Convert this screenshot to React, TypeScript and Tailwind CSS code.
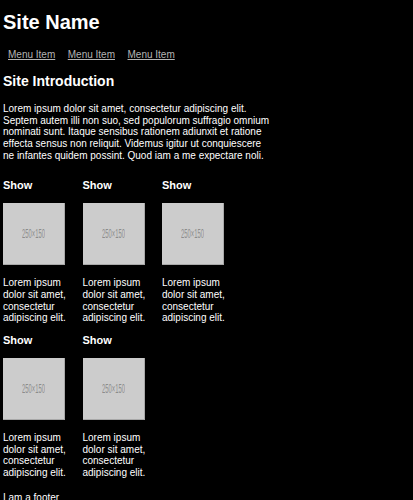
const menuItems = ['Menu Item', 'Menu Item', 'Menu Item'];

const shows = [1, 2, 3, 4, 5];

const Placeholder = () => {
  return (
    <div className="w-[62px] h-[62px] bg-[#cccccc] border-r border-b border-[#a8a8a8] flex items-center justify-center overflow-hidden">
      <span className="text-[13px] leading-none text-[#8c8c8c] scale-x-[0.45] whitespace-nowrap">250×150</span>
    </div>
  );
};

const ShowCard = () => {
  return (
    <div className="w-[63.5px]">
      <h3 className="text-[11px] leading-[13px] font-bold">Show</h3>
      <div className="mt-[11px]">
        <Placeholder />
      </div>
      <p className="mt-[12px] text-[10px] leading-[11.67px]">
        Lorem ipsum dolor sit amet, consectetur adipiscing elit.
      </p>
    </div>
  );
};

export default function App() {
  return (
    <div className="min-h-screen bg-black text-white px-[3px] pt-[11px] font-['Liberation_Sans',Arial,sans-serif]">
      <h1 className="text-[20px] leading-[23px] font-bold">Site Name</h1>

      <nav className="mt-[15px] pl-[5px] flex gap-x-[12.5px]">
        {menuItems.map((item, i) => (
          <a key={i} href="#" className="text-[10px] leading-[11.5px] text-[#b4b4b4] underline">
            {item}
          </a>
        ))}
      </nav>

      <h2 className="mt-[12.5px] text-[14px] leading-[16px] font-bold">Site Introduction</h2>

      <p className="mt-[14px] w-[290px] text-[10px] leading-[11.67px]">
        Lorem ipsum dolor sit amet, consectetur adipiscing elit.
        <br />
        Septem autem illi non suo, sed populorum suffragio omnium
        <br />
        nominati sunt. Itaque sensibus rationem adiunxit et ratione
        <br />
        effecta sensus non reliquit. Videmus igitur ut conquiescere
        <br />
        ne infantes quidem possint. Quod iam a me expectare noli.
      </p>

      <div className="mt-[18px] w-[266px] flex flex-wrap gap-x-[16px] gap-y-[10px]">
        {shows.map((n) => (
          <ShowCard key={n} />
        ))}
      </div>

      <footer className="mt-[13px] text-[10px] leading-[11.67px]">I am a footer</footer>
    </div>
  );
}
